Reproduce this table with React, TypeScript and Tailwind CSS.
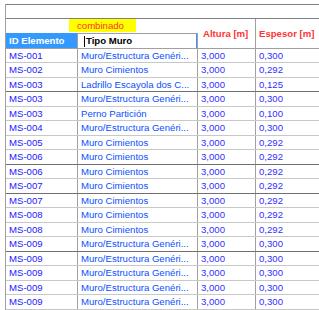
type Row = { id: string; tipo: string; altura: string; espesor: string; dark?: boolean };

const rows: Row[] = [
  { id: "MS-001", tipo: "Muro/Estructura Genéri...", altura: "3,000", espesor: "0,300" },
  { id: "MS-002", tipo: "Muro Cimientos", altura: "3,000", espesor: "0,292" },
  { id: "MS-003", tipo: "Ladrillo Escayola dos C...", altura: "3,000", espesor: "0,125", dark: true },
  { id: "MS-003", tipo: "Muro/Estructura Genéri...", altura: "3,000", espesor: "0,300" },
  { id: "MS-003", tipo: "Perno Partición", altura: "3,000", espesor: "0,100" },
  { id: "MS-004", tipo: "Muro/Estructura Genéri...", altura: "3,000", espesor: "0,300" },
  { id: "MS-005", tipo: "Muro Cimientos", altura: "3,000", espesor: "0,292" },
  { id: "MS-006", tipo: "Muro Cimientos", altura: "3,000", espesor: "0,292", dark: true },
  { id: "MS-006", tipo: "Muro Cimientos", altura: "3,000", espesor: "0,292" },
  { id: "MS-007", tipo: "Muro Cimientos", altura: "3,000", espesor: "0,292", dark: true },
  { id: "MS-007", tipo: "Muro Cimientos", altura: "3,000", espesor: "0,292" },
  { id: "MS-008", tipo: "Muro Cimientos", altura: "3,000", espesor: "0,292" },
  { id: "MS-008", tipo: "Muro Cimientos", altura: "3,000", espesor: "0,292" },
  { id: "MS-009", tipo: "Muro/Estructura Genéri...", altura: "3,000", espesor: "0,300", dark: true },
  { id: "MS-009", tipo: "Muro/Estructura Genéri...", altura: "3,000", espesor: "0,300" },
  { id: "MS-009", tipo: "Muro/Estructura Genéri...", altura: "3,000", espesor: "0,300" },
  { id: "MS-009", tipo: "Muro/Estructura Genéri...", altura: "3,000", espesor: "0,300" },
  { id: "MS-009", tipo: "Muro/Estructura Genéri...", altura: "3,000", espesor: "0,300" },
];

export default function App() {
  return (
    <div
      className="w-[319px] h-[310px] overflow-hidden bg-white pt-[4px] pl-[5px] text-[9.6px] leading-none"
      style={{ fontFamily: '"Liberation Sans", Arial, sans-serif' }}
    >
      <div className="w-[400px] border-l border-[#a0a0a0]">
        {/* blank title strip */}
        <div className="h-[15px] border-t border-b border-[#808080]" />

        {/* header block */}
        <div className="flex h-[30px] border-b border-[#a0a0a0]">
          <div className="flex w-[192px] flex-col">
            <div className="h-[14px] pl-[63px]">
              <div className="flex h-[13px] w-[67px] items-center bg-[#ffff00] pl-[8px] text-[#ff3030]">
                combinado
              </div>
            </div>
            <div className="flex h-[15px]">
              <div className="flex w-[72px] items-center border-r border-[#a0a0a0] bg-[#3399ff] pl-[3px] font-bold text-white">
                ID Elemento
              </div>
              <div className="w-[120px] border-r border-[#a0a0a0]">
                <div className="flex h-full items-center border-t border-r border-t-[#a0a0a0] border-r-[#3399ff] pl-[6px] font-bold text-black">
                  <span className="mr-[1px] h-[11px] w-[1px] bg-black" />
                  Tipo Muro
                </div>
              </div>
            </div>
          </div>
          <div className="flex w-[58px] items-center border-r border-[#a0a0a0] pl-[5px] font-bold text-[#ff3333]">
            Altura [m]
          </div>
          <div className="flex w-[70px] items-center border-r border-[#a0a0a0] pl-[3px] font-bold text-[#ff3333]">
            Espesor [m]
          </div>
        </div>

        {/* data rows */}
        {rows.map((r, i) => (
          <div
            key={i}
            className={
              "flex border-b " +
              (i % 2 === 0 ? "h-[14px] " : "h-[15px] ") +
              (r.dark ? "border-[#707070]" : "border-[#c8c8c8]")
            }
          >
            <div className="flex w-[72px] items-center border-r border-[#a0a0a0] pl-[3px] text-[#1a1aff]">
              {r.id}
            </div>
            <div className="flex w-[120px] items-center overflow-hidden whitespace-nowrap border-r border-[#a0a0a0] pl-[3px] text-[#0a50ff]">
              {r.tipo}
            </div>
            <div className="flex w-[58px] items-center border-r border-[#a0a0a0] pl-[3px] text-[#3030ff]">
              {r.altura}
            </div>
            <div className="flex w-[70px] items-center border-r border-[#a0a0a0] pl-[3px] text-[#3030ff]">
              {r.espesor}
            </div>
          </div>
        ))}
      </div>
    </div>
  );
}
